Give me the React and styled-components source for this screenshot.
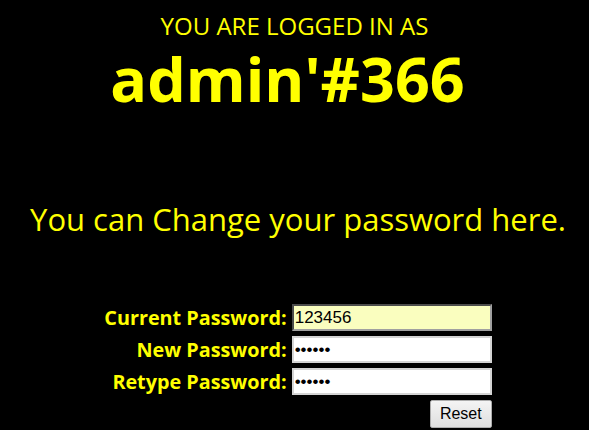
import React from "react";
import styled, { createGlobalStyle } from "styled-components";

const Global = createGlobalStyle`
  html, body { margin: 0; padding: 0; background: #000; }
  body { font-family: "Open Sans", "Noto Sans", sans-serif; color: #ffff00; }
`;

const Page = styled.div`
  display: flex;
  flex-direction: column;
  align-items: center;
  padding-top: 10px;
  width: 589px;
  min-height: 430px;
  box-sizing: border-box;
`;

const Title = styled.div`
  font-size: 24px;
  line-height: 32px;
  color: #ffff00;
`;

const User = styled.h1`
  margin: 9px 14px 0 0;
  font-size: 61px;
  line-height: 56px;
  font-weight: 700;
  color: #ffff00;
`;

const Notice = styled.p`
  margin: 92px 0 0 7px;
  font-size: 31px;
  line-height: 40px;
  color: #ffff00;
`;

const Form = styled.form`
  margin-top: 65px;
  margin-left: 7px;
  display: grid;
  grid-template-columns: auto 200px;
  column-gap: 5px;
  row-gap: 5px;
  align-items: center;
`;

const Label = styled.label`
  font-size: 19.8px;
  font-weight: 700;
  text-align: right;
  color: #ffff00;
  line-height: 27px;
`;

const Input = styled.input`
  box-sizing: border-box;
  width: 200px;
  height: 27px;
  margin: 0;
  padding: 1px 1px;
  font-family: "Liberation Sans", Arial, sans-serif;
  font-size: 17px;
  color: #000;
  background: ${(p) => (p.$filled ? "#fafebf" : "#fff")};
  border: 2px ${(p) => (p.$filled ? "inset" : "solid")}
    ${(p) => (p.$filled ? "#a0a0a0" : "#d4d4d4")};
  outline: none;
`;

const Actions = styled.div`
  grid-column: 2;
  display: flex;
  justify-content: flex-end;
`;

const Button = styled.button`
  height: 28px;
  padding: 0 9px;
  font-family: "Liberation Sans", Arial, sans-serif;
  font-size: 16px;
  color: #000;
  background: linear-gradient(#f4f4f4, #dedede);
  border: 1px solid #acacac;
  border-radius: 2px;
`;

export default function App() {
  return (
    <>
      <Global />
      <Page>
        <Title>YOU ARE LOGGED IN AS</Title>
        <User>admin'#366</User>
        <Notice>You can Change your password here.</Notice>
        <Form onSubmit={(e) => e.preventDefault()}>
          <Label htmlFor="cur">Current Password:</Label>
          <Input id="cur" type="text" defaultValue="123456" $filled />
          <Label htmlFor="new">New Password:</Label>
          <Input id="new" type="password" defaultValue="123456" />
          <Label htmlFor="re">Retype Password:</Label>
          <Input id="re" type="password" defaultValue="123456" />
          <Actions>
            <Button type="reset">Reset</Button>
          </Actions>
        </Form>
      </Page>
    </>
  );
}
